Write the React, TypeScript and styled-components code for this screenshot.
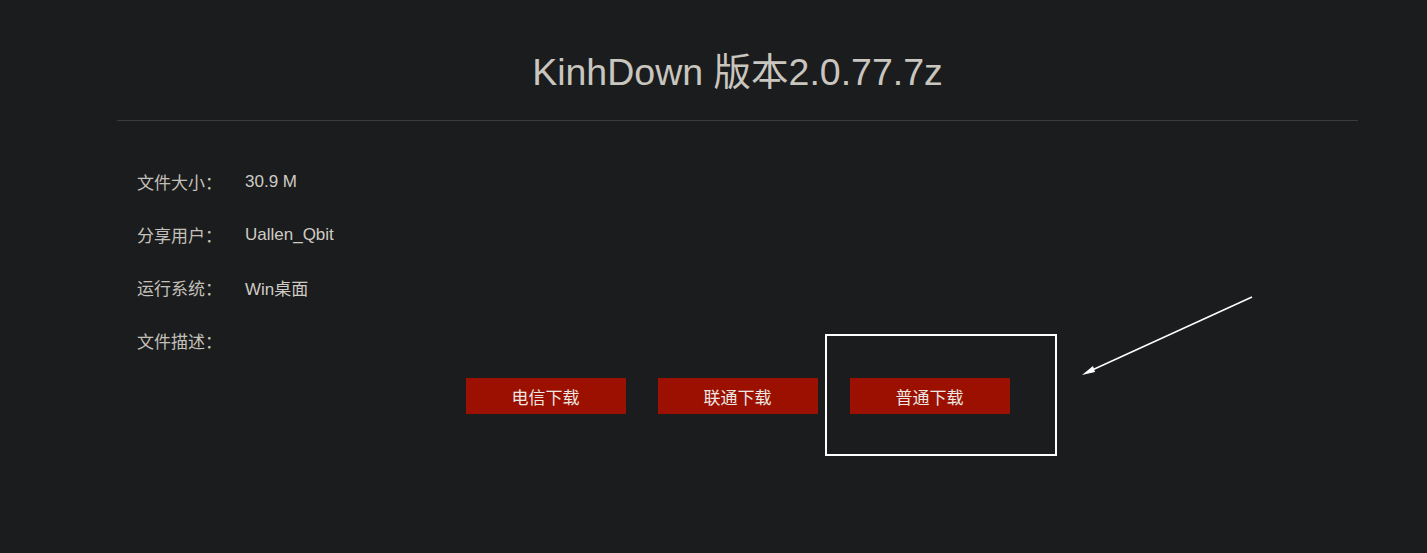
import React from 'react';
import styled, { createGlobalStyle } from 'styled-components';

const GlobalStyle = createGlobalStyle`
  html, body {
    margin: 0;
    padding: 0;
    background: #1b1c1e;
  }
  body {
    font-family: "Liberation Sans", Arial, "Noto Sans CJK SC", sans-serif;
    color: #cfcbc4;
  }
`;

const Page = styled.div`
  position: relative;
  width: 1427px;
  height: 553px;
  box-sizing: border-box;
  padding: 0 69px 0 117px;
  overflow: hidden;
`;

const Header = styled.header`
  padding: 52px 0 28px;
  border-bottom: 1px solid #3a3b3d;
  text-align: center;
`;

const Title = styled.h1`
  margin: 0;
  font-size: 37.5px;
  line-height: 40px;
  font-weight: 400;
  color: #c9c5bf;
`;

const InfoList = styled.dl`
  margin: 34px 0 0;
  padding: 0 20px;
`;

const Row = styled.div`
  display: flex;
  align-items: center;
  height: 53px;
  font-size: 17px;
`;

const Label = styled.dt`
  width: 108px;
  flex: none;
  color: #c4c0ba;
`;

const Value = styled.dd`
  margin: 0;
  color: #cfcbc4;
`;

const Actions = styled.div`
  display: flex;
  justify-content: center;
  gap: 32px;
  margin-top: 11px;
`;

const DownloadButton = styled.button`
  width: 160px;
  height: 36px;
  border: none;
  border-radius: 0;
  background: #9b1000;
  color: #ebe7e2;
  font-family: "Liberation Sans", "Noto Sans CJK SC", sans-serif;
  font-size: 17px;
  font-weight: 400;
  cursor: pointer;
`;

const HighlightBox = styled.div`
  position: absolute;
  left: 825px;
  top: 334px;
  width: 232px;
  height: 122px;
  box-sizing: border-box;
  border: 2px solid #ffffff;
  pointer-events: none;
`;

const ArrowLayer = styled.svg`
  position: absolute;
  left: 0;
  top: 0;
  pointer-events: none;
`;

const info = [
  { label: '文件大小：', value: '30.9 M' },
  { label: '分享用户：', value: 'Uallen_Qbit' },
  { label: '运行系统：', value: 'Win桌面' },
  { label: '文件描述：', value: '' },
];

const buttons = ['电信下载', '联通下载', '普通下载'];

export default function App() {
  return (
    <>
      <GlobalStyle />
      <Page>
        <Header>
          <Title>KinhDown 版本2.0.77.7z</Title>
        </Header>
        <InfoList>
          {info.map((item) => (
            <Row key={item.label}>
              <Label>{item.label}</Label>
              <Value>{item.value}</Value>
            </Row>
          ))}
        </InfoList>
        <Actions>
          {buttons.map((b) => (
            <DownloadButton key={b}>{b}</DownloadButton>
          ))}
        </Actions>
        <HighlightBox />
        <ArrowLayer width="1427" height="553" viewBox="0 0 1427 553">
          <line x1="1252" y1="297" x2="1090" y2="371" stroke="#ffffff" strokeWidth="1.5" />
          <polygon points="1082,375 1093,366 1095,372" fill="#ffffff" />
        </ArrowLayer>
      </Page>
    </>
  );
}
